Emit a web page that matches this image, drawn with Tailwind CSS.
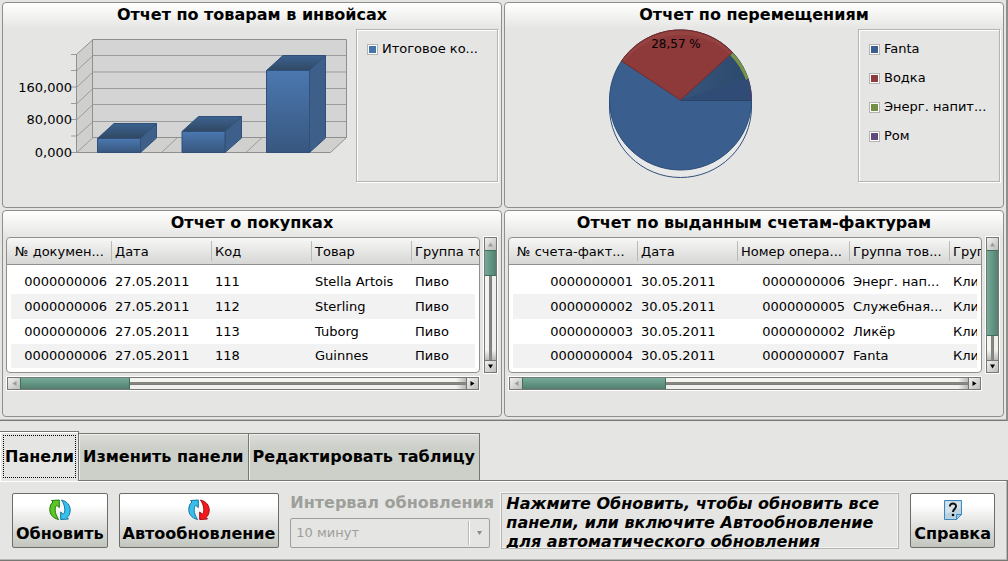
<!DOCTYPE html>
<html lang="ru">
<head>
<meta charset="utf-8">
<meta name="viewport" content="width=device-width, initial-scale=1">
<title>Панели</title>
<script src="https://cdn.jsdelivr.net/npm/@tailwindcss/browser@4"></script>
</head>
<body class="min-h-screen bg-[#e5e5e3] font-['DejaVu_Sans',sans-serif] text-[13px] text-black">
<main class="flex flex-col">

<!-- Dashboard panels -->
<section class="grid grid-cols-2 gap-0.5 border-r-2 border-b border-[#777774] border-r-[#8f8f8c] pt-0.5 pr-0.5 pl-0.5 pb-[3px] shadow-[inset_0_-1px_0_#b9b9b6]">

  <article class="min-w-0 rounded-sm border border-[#8f8f8c] bg-[linear-gradient(to_bottom,#ffffff_0,#e5e5e3_26px)] pb-[25px]">
    <h2 class="h-[26px] text-center text-[16px] leading-[24px] font-bold whitespace-nowrap">Отчет по товарам в инвойсах</h2>
    <div class="flex pr-[3px]">
      <svg class="h-[153px] min-w-0 flex-1" viewBox="3 29 353 153" role="img" aria-label="Столбчатая диаграмма">
        <defs>
          <linearGradient id="front" x1="0" y1="0" x2="0" y2="1"><stop offset="0" stop-color="#4b78b0"/><stop offset="1" stop-color="#38577f"/></linearGradient>
          <linearGradient id="top" x1="0" y1="0" x2="0" y2="1"><stop offset="0" stop-color="#3c628f"/><stop offset="1" stop-color="#304863"/></linearGradient>
        </defs>
        <path d="M77 54.5L93 39.5V137.500L77 152.500Z" fill="#cfcfcd"/>
        <path d="M93 39.500H346.500V137.500H93Z" fill="#d4d4d4"/>
        <path d="M77 152.500L93 137.500H346.500L330.500 152.500Z" fill="#d0d0ce"/>
        <g fill="none" stroke="#9b9b9b">
          <path d="M93 55.500H346.500M93 72H346.500M93 88.500H346.500M93 104.500H346.500M93 121.500H346.500"/>
          <path d="M77 70.500L93 55.500M77 87L93 72M77 103.500L93 88.500M77 119.500L93 104.500M77 136L93 121.500M77 152.500L93 137.500M161.500 152.500L177.500 137.500M246 152.500L262 137.500"/>
          <path d="M71 54.500H77M71 70.500H77M71 87H77M71 103.500H77M71 119.500H77M71 136H77M71 152.500H77"/>
          <path d="M76.500 54.500V152.500H330.500L346.500 137.500V39.500H93L76.500 54.500M92.500 39.500V137.500H346.500" stroke="#909090"/>
        </g>
        <g stroke="#2f5079" stroke-linejoin="round">
          <path d="M97.500 138.500L114 123.500H156.500L140.500 138.500Z" fill="url(#top)"/>
          <path d="M140.500 138.500L156.500 123.500V138L140.500 152.500Z" fill="#3e5f8a"/>
          <path d="M97.500 138.500H140.500V152.500H97.500Z" fill="url(#front)"/>
          <path d="M182 131.500L198.500 116.500H241.500L225 131.500Z" fill="url(#top)"/>
          <path d="M225 131.500L241.500 116.500V138L225 152.500Z" fill="#3e5f8a"/>
          <path d="M182 131.500H225V152.500H182Z" fill="url(#front)"/>
          <path d="M266.500 70.500L283 55.500H325.500L309.500 70.500Z" fill="url(#top)"/>
          <path d="M309.500 70.500L325.500 55.500V138L309.500 152.500Z" fill="#3e5f8a"/>
          <path d="M266.500 70.500H309.500V152.500H266.500Z" fill="url(#front)"/>
        </g>
        <g class="text-[13px]" text-anchor="end">
          <text x="72" y="92">160,000</text><text x="72" y="124">80,000</text><text x="72" y="157">0,000</text>
        </g>
      </svg>
      <ul class="flex h-[153px] w-[142px] shrink-0 flex-col border border-[#b4b4b2] p-[10px] shadow-[inset_1px_1px_0_#fff,1px_1px_0_#fff]">
        <li class="flex items-center gap-1 text-[13px] leading-[18px] whitespace-nowrap"><i class="size-[11px] border border-[#b4b4b2] bg-[#4673a9] shadow-[inset_0_0_0_1px_#fff]"></i>Итоговое ко...</li>
      </ul>
    </div>
  </article>

  <article class="min-w-0 rounded-sm border border-[#8f8f8c] bg-[linear-gradient(to_bottom,#ffffff_0,#e5e5e3_26px)] pb-[25px]">
    <h2 class="h-[26px] text-center text-[16px] leading-[24px] font-bold whitespace-nowrap">Отчет по перемещениям</h2>
    <div class="flex pr-[3px]">
      <svg class="h-[153px] min-w-0 flex-1" viewBox="505 29 353 153" role="img" aria-label="Круговая диаграмма">
        <defs>
          <linearGradient id="slice" x1="0" y1="0" x2="1" y2="0"><stop offset="0" stop-color="#36557a"/><stop offset="1" stop-color="#2b496d"/></linearGradient>
        </defs>
        <path d="M609.500 100V107A71 70.500 0 0 0 751.500 107V100" fill="#e7e8e7" stroke="#2f5079"/>
        <ellipse cx="680.500" cy="100" rx="71" ry="70" fill="#3a5f8f" stroke="#2b4d77"/>
        <path d="M680.500 100L732.500 52.500A71 70.500 0 0 1 751.500 100Z" fill="url(#slice)"/>
        <path d="M680.500 100L747.500 78A71 70.500 0 0 1 751.500 100Z" fill="#304b75"/>
        <path d="M732.500 52.500A71 70.500 0 0 1 748.500 78.500L746 80A74 74 0 0 0 730 55Z" fill="#789345"/>
        <path d="M748 78.500A71 70.500 0 0 1 751.500 100" fill="none" stroke="#55406d"/>
        <path d="M680.500 100.500H751.500" stroke="#28425f"/>
        <path d="M680.500 100L621.500 61A71 70.500 0 0 1 732.500 52.500Z" fill="#8e3a3a" stroke="#742b2d"/>
        <path d="M622.500 60.500A71 70.500 0 0 1 731.500 52.500L730 54A72 70.500 0 0 0 624 61.500Z" fill="#954341"/>
        <text class="text-[12px]" x="676" y="48" text-anchor="middle">28,57 %</text>
      </svg>
      <ul class="flex h-[153px] w-[142px] shrink-0 flex-col gap-[11px] border border-[#b4b4b2] p-[10px] shadow-[inset_1px_1px_0_#fff,1px_1px_0_#fff]">
        <li class="flex items-center gap-1 text-[13px] leading-[18px] whitespace-nowrap"><i class="size-[11px] border border-[#b4b4b2] bg-[#3a5f8f] shadow-[inset_0_0_0_1px_#fff]"></i>Fanta</li>
        <li class="flex items-center gap-1 text-[13px] leading-[18px] whitespace-nowrap"><i class="size-[11px] border border-[#b4b4b2] bg-[#8e3a3a] shadow-[inset_0_0_0_1px_#fff]"></i>Водка</li>
        <li class="flex items-center gap-1 text-[13px] leading-[18px] whitespace-nowrap"><i class="size-[11px] border border-[#b4b4b2] bg-[#748f42] shadow-[inset_0_0_0_1px_#fff]"></i>Энерг. напит...</li>
        <li class="flex items-center gap-1 text-[13px] leading-[18px] whitespace-nowrap"><i class="size-[11px] border border-[#b4b4b2] bg-[#604b7c] shadow-[inset_0_0_0_1px_#fff]"></i>Ром</li>
      </ul>
    </div>
  </article>

  <article class="min-w-0 rounded-sm border border-[#8f8f8c] bg-[linear-gradient(to_bottom,#ffffff_0,#e5e5e3_26px)] pb-[26px]">
    <h2 class="h-[26px] text-center text-[16px] leading-[24px] font-bold whitespace-nowrap">Отчет о покупках</h2>
    <div class="grid grid-cols-[minmax(0,1fr)_13px] gap-x-1 gap-y-1 pr-[4px] pl-[3px]">
      <div class="overflow-hidden rounded-sm border border-[#8f8f8c] bg-white bg-[linear-gradient(to_bottom,#f7f7f7_0,#d6d6d4_26px,#8f8f8c_26px,#8f8f8c_27px,#fff_27px)] px-1 pb-1">
        <table class="w-full table-fixed border-collapse whitespace-nowrap">
          <colgroup><col class="w-[100px]"><col class="w-[100px]"><col class="w-[100px]"><col class="w-[100px]"><col></colgroup>
          <thead class="text-left"><tr class="h-[27px] [&>th]:px-1 [&>th]:font-normal [&>th+th]:bg-[linear-gradient(#b9b9b6,#b9b9b6)] [&>th+th]:bg-[length:1px_20px] [&>th+th]:bg-[position:0_3px] [&>th+th]:bg-no-repeat"><th scope="col">№ докумен...</th><th scope="col">Дата</th><th scope="col">Код</th><th scope="col">Товар</th><th scope="col">Группа товара</th></tr></thead>
          <tbody class="before:block before:h-1 [&>tr]:h-[25px] [&>tr:nth-child(even)]:bg-[#f2f2f2] [&_td]:overflow-hidden [&_td]:px-1 [&_td:first-child]:text-right">
            <tr><td>0000000006</td><td>27.05.2011</td><td>111</td><td>Stella Artois</td><td>Пиво</td></tr>
            <tr><td>0000000006</td><td>27.05.2011</td><td>112</td><td>Sterling</td><td>Пиво</td></tr>
            <tr><td>0000000006</td><td>27.05.2011</td><td>113</td><td>Tuborg</td><td>Пиво</td></tr>
            <tr class="!h-6"><td>0000000006</td><td>27.05.2011</td><td>118</td><td>Guinnes</td><td>Пиво</td></tr>
          </tbody>
        </table>
      </div>
      <div class="flex flex-col border border-[#777774] bg-[linear-gradient(to_right,#f4f4f3_4px,#777774_4px,#8e8e84_5px,#777774_7px,#f0f0ee_7px)] outline outline-white">
        <button type="button" aria-label="Вверх" class="grid h-[12px] place-items-center bg-linear-to-br from-[#f0f0ee] to-[#bdbdba]"><svg class="size-[5px]" viewBox="0 0 5 5"><path d="M0 4.500L2.500 .5 5 4.500Z" fill="#9b9b98"/></svg></button>
        <div class="h-[26px] border-y border-[#3f705f] bg-linear-to-r from-[#76ab99] to-[#527f70]"></div>
        <div class="flex-1 bg-[linear-gradient(to_top,#8888,transparent_10px)]"></div>
        <button type="button" aria-label="Вниз" class="grid h-[12px] place-items-center border-t border-[#777774] bg-linear-to-br from-[#f0f0ee] to-[#bdbdba]"><svg class="size-[5px]" viewBox="0 0 5 5"><path d="M0 .5L2.500 4.500 5 .5Z"/></svg></button>
      </div>
      <div class="mx-px flex h-[13px] border border-[#777774] bg-[linear-gradient(to_bottom,#f4f4f3_4px,#777774_4px,#8e8e84_5px,#777774_7px,#f0f0ee_7px)] outline outline-white">
        <button type="button" aria-label="Влево" class="grid w-[12px] place-items-center bg-linear-to-br from-[#f0f0ee] to-[#bdbdba]"><svg class="size-[5px]" viewBox="0 0 5 5"><path d="M4.500 0L.5 2.500 4.500 5Z" fill="#9b9b98"/></svg></button>
        <div class="w-[110px] border-x border-[#3f705f] bg-linear-to-b from-[#76ab99] to-[#527f70]"></div>
        <div class="flex-1 bg-[linear-gradient(to_left,#8888,transparent_10px)]"></div>
        <button type="button" aria-label="Вправо" class="grid w-[12px] place-items-center border-l border-[#777774] bg-linear-to-br from-[#f0f0ee] to-[#bdbdba]"><svg class="size-[5px]" viewBox="0 0 5 5"><path d="M.5 0L4.500 2.500 .5 5Z"/></svg></button>
      </div>
    </div>
  </article>

  <article class="min-w-0 rounded-sm border border-[#8f8f8c] bg-[linear-gradient(to_bottom,#ffffff_0,#e5e5e3_26px)] pb-[26px]">
    <h2 class="h-[26px] text-center text-[16px] leading-[24px] font-bold whitespace-nowrap">Отчет по выданным счетам-фактурам</h2>
    <div class="grid grid-cols-[minmax(0,1fr)_13px] gap-x-1 gap-y-1 pr-[4px] pl-[3px]">
      <div class="overflow-hidden rounded-sm border border-[#8f8f8c] bg-white bg-[linear-gradient(to_bottom,#f7f7f7_0,#d6d6d4_26px,#8f8f8c_26px,#8f8f8c_27px,#fff_27px)] px-1 pb-1">
        <table class="w-full table-fixed border-collapse whitespace-nowrap">
          <colgroup><col class="w-[124px]"><col class="w-[100px]"><col class="w-[112px]"><col class="w-[100px]"><col></colgroup>
          <thead class="text-left"><tr class="h-[27px] [&>th]:px-1 [&>th]:font-normal [&>th+th]:bg-[linear-gradient(#b9b9b6,#b9b9b6)] [&>th+th]:bg-[length:1px_20px] [&>th+th]:bg-[position:0_3px] [&>th+th]:bg-no-repeat"><th scope="col">№ счета-факт...</th><th scope="col">Дата</th><th scope="col">Номер опера...</th><th scope="col">Группа тов...</th><th scope="col">Группа</th></tr></thead>
          <tbody class="before:block before:h-1 [&>tr]:h-[25px] [&>tr:nth-child(even)]:bg-[#f2f2f2] [&_td]:overflow-hidden [&_td]:px-1 [&_td:last-child]:pr-0 [&_td:first-child]:text-right [&_td:nth-child(3)]:text-right">
            <tr><td>0000000001</td><td>30.05.2011</td><td>0000000006</td><td>Энерг. нап...</td><td>Клиент</td></tr>
            <tr><td>0000000002</td><td>30.05.2011</td><td>0000000005</td><td>Служебная...</td><td>Клиент</td></tr>
            <tr><td>0000000003</td><td>30.05.2011</td><td>0000000002</td><td>Ликёр</td><td>Клиент</td></tr>
            <tr class="!h-6"><td>0000000004</td><td>30.05.2011</td><td>0000000007</td><td>Fanta</td><td>Клиент</td></tr>
          </tbody>
        </table>
      </div>
      <div class="flex flex-col border border-[#777774] bg-[linear-gradient(to_right,#f4f4f3_4px,#777774_4px,#8e8e84_5px,#777774_7px,#f0f0ee_7px)] outline outline-white">
        <button type="button" aria-label="Вверх" class="grid h-[12px] place-items-center bg-linear-to-br from-[#f0f0ee] to-[#bdbdba]"><svg class="size-[5px]" viewBox="0 0 5 5"><path d="M0 4.500L2.500 .5 5 4.500Z" fill="#9b9b98"/></svg></button>
        <div class="h-[86px] border-y border-[#3f705f] bg-linear-to-r from-[#76ab99] to-[#527f70]"></div>
        <div class="flex-1 bg-[linear-gradient(to_top,#8888,transparent_10px)]"></div>
        <button type="button" aria-label="Вниз" class="grid h-[12px] place-items-center border-t border-[#777774] bg-linear-to-br from-[#f0f0ee] to-[#bdbdba]"><svg class="size-[5px]" viewBox="0 0 5 5"><path d="M0 .5L2.500 4.500 5 .5Z"/></svg></button>
      </div>
      <div class="mx-px flex h-[13px] border border-[#777774] bg-[linear-gradient(to_bottom,#f4f4f3_4px,#777774_4px,#8e8e84_5px,#777774_7px,#f0f0ee_7px)] outline outline-white">
        <button type="button" aria-label="Влево" class="grid w-[12px] place-items-center bg-linear-to-br from-[#f0f0ee] to-[#bdbdba]"><svg class="size-[5px]" viewBox="0 0 5 5"><path d="M4.500 0L.5 2.500 4.500 5Z" fill="#9b9b98"/></svg></button>
        <div class="w-[144px] border-x border-[#3f705f] bg-linear-to-b from-[#76ab99] to-[#527f70]"></div>
        <div class="flex-1 bg-[linear-gradient(to_left,#8888,transparent_10px)]"></div>
        <button type="button" aria-label="Вправо" class="grid w-[12px] place-items-center border-l border-[#777774] bg-linear-to-br from-[#f0f0ee] to-[#bdbdba]"><svg class="size-[5px]" viewBox="0 0 5 5"><path d="M.5 0L4.500 2.500 .5 5Z"/></svg></button>
      </div>
    </div>
  </article>
</section>

<!-- Tabs -->
<div role="tablist" class="flex items-end pt-[10px] text-[16px] font-bold whitespace-nowrap shadow-[inset_0_-1px_0_#777774]">
  <button type="button" role="tab" aria-selected="true" class="h-[50px] border-t border-r border-[#777774] bg-[#e5e5e3] py-[3px] pr-0.5 pl-[3px] shadow-[inset_1px_1px_0_#fff]"><span class="flex h-[43px] items-center border border-dotted border-black px-px">Панели</span></button>
  <button type="button" role="tab" aria-selected="false" class="h-12 border border-l-0 border-[#777774] bg-linear-to-b from-[#dddddb] to-[#cdcfc9] to-30% px-1 shadow-[inset_1px_1px_0_#eeeeec]">Изменить панели</button>
  <button type="button" role="tab" aria-selected="false" class="h-12 border border-l-0 border-[#777774] bg-linear-to-b from-[#dddddb] to-[#cdcfc9] to-30% px-1 shadow-[inset_1px_1px_0_#eeeeec]">Редактировать таблицу</button>
</div>

<!-- Toolbar -->
<section role="tabpanel" class="flex gap-[11px] border-r border-b border-[#777774] px-3 pt-3 pb-[11px] shadow-[inset_-1px_-1px_0_#b9b9b6,inset_0_1px_0_#fff]">
  <button type="button" class="flex h-[55px] shrink-0 flex-col items-center justify-between rounded-xs border border-[#6b6d66] bg-linear-to-b from-white from-20% via-[#e8e8e7] to-[#c2c5be] px-[3px] pt-[5px] text-[16px] leading-[26px] font-bold">
    <svg class="size-[22px] shrink-0" viewBox="0 0 22 22"><path d="M9.500 20.500C3.500 19 .8 15 .8 10.500C.8 7 2 4.500 4 3L2.500 1.500 10.300 1V8.600L7.800 6.300C5.500 8 5.300 14 9.500 20.500Z" fill="#5bc723" stroke="#237510" stroke-linejoin="round"/><path d="M12.500 1C18.500 2.500 21.200 6.500 21.200 11C21.200 14.500 20 17 18 18.500L19.500 20 11.700 20.500V13L14.200 15.200C16.500 13.500 16.700 7.500 12.500 1Z" fill="#37c0ec" stroke="#14749d" stroke-linejoin="round"/></svg>
    Обновить
  </button>
  <button type="button" class="flex h-[55px] shrink-0 flex-col items-center justify-between rounded-xs border border-[#6b6d66] bg-linear-to-b from-white from-20% via-[#e8e8e7] to-[#c2c5be] px-[3px] pt-[5px] text-[16px] leading-[26px] font-bold">
    <svg class="size-[22px] shrink-0" viewBox="0 0 22 22"><path d="M9.500 20.500C3.500 19 .8 15 .8 10.500C.8 7 2 4.500 4 3L2.500 1.500 10.300 1V8.600L7.800 6.300C5.500 8 5.300 14 9.500 20.500Z" fill="#37c0ec" stroke="#14749d" stroke-linejoin="round"/><path d="M12.500 1C18.500 2.500 21.200 6.500 21.200 11C21.200 14.500 20 17 18 18.500L19.500 20 11.700 20.500V13L14.200 15.200C16.500 13.500 16.700 7.500 12.500 1Z" fill="#f3191d" stroke="#a50d12" stroke-linejoin="round"/></svg>
    Автообновление
  </button>
  <div class="flex h-[55px] w-[200px] shrink-0 flex-col justify-between text-[#9d9f9a]">
    <label for="interval" class="text-[16px] leading-5 font-bold whitespace-nowrap">Интервал обновления</label>
    <div class="relative">
      <select id="interval" disabled class="block h-[30px] w-full appearance-none rounded-xs border border-[#9d9f9a] px-[5px] text-[13px] opacity-100"><option>10 минут</option></select>
      <span class="pointer-events-none absolute inset-y-[3px] right-0 grid w-[22px] place-items-center border-l border-[#b9b9b6] shadow-[inset_1px_0_0_#fff]"><svg class="h-1 w-[5px]" viewBox="0 0 5 4"><path d="M0 0H5L2.500 4Z" fill="#888a85"/></svg></span>
    </div>
  </div>
  <p class="h-[56px] min-w-0 flex-1 overflow-hidden border border-[#b4b4b2] px-1 text-[16px] leading-[19px] font-bold italic shadow-[-1px_-1px_0_#f4f4f3,inset_-1px_-1px_0_#f4f4f3]">Нажмите Обновить, чтобы обновить все панели, или включите Автообновление для автоматического обновления</p>
  <button type="button" class="flex h-[55px] shrink-0 flex-col items-center justify-between rounded-xs border border-[#6b6d66] bg-linear-to-b from-white from-20% via-[#e8e8e7] to-[#c2c5be] px-[3px] pt-[5px] text-[16px] leading-[26px] font-bold">
    <svg class="size-[22px] shrink-0" viewBox="0 0 22 22"><path d="M2.500 1.500H19.500V15.500L14.500 20.500H2.500Z" fill="#b9d2de" stroke="#3b87c4"/><path d="M3.500 2.500H18.500V9L3.500 15Z" fill="#d3e2e8"/><path d="M14.500 20.500V15.500H19.500Z" fill="#a3cbe3" stroke="#3b87c4"/><path d="M8 7.500C7.500 3.500 14.300 3.500 14 7.500C13.900 10 11 10.200 11 13" fill="none" stroke="#111" stroke-width="2"/><circle cx="11" cy="16" r="1.300"/></svg>
    Справка
  </button>
</section>
</main>
</body>
</html>
